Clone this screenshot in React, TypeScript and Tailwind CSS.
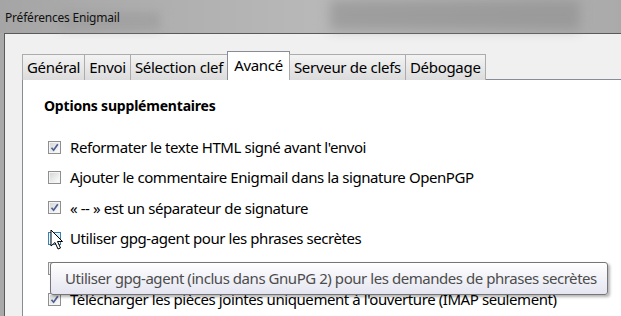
import React from 'react';

const tabs = ['Général', 'Envoi', 'Sélection clef', 'Avancé', 'Serveur de clefs', 'Débogage'];

const rows = [
  { label: "Reformater le texte HTML signé avant l'envoi", checked: true },
  { label: 'Ajouter le commentaire Enigmail dans la signature OpenPGP', checked: false },
  { label: '« -- » est un séparateur de signature', checked: true },
  { label: 'Utiliser gpg-agent pour les phrases secrètes', checked: false, hover: true },
  { label: '', checked: false },
  { label: "Télécharger les pièces jointes uniquement à l'ouverture (IMAP seulement)", checked: true },
];

function Checkbox({ checked, hover }: { checked: boolean; hover?: boolean }) {
  return (
    <div
      className={`w-[13px] h-[13px] border p-[1px] shrink-0 ${hover ? 'border-[#3c7fb1] bg-[#eaf6fd]' : 'border-[#8e8f8f] bg-[#f4f4f4]'}`}
    >
      <div
        className={`w-full h-full relative ${hover ? 'bg-gradient-to-br from-[#b9e2f9] to-[#e6f5fd]' : 'bg-gradient-to-br from-[#d8d8d8] to-[#fbfbfb]'}`}
      >
        {checked && (
          <svg viewBox="0 0 9 9" className="absolute inset-0 w-full h-full">
            <path d="M1.5 4.8 L3.6 7.2 L7.8 1.2" stroke="#4b5f92" strokeWidth="1.7" fill="none" />
          </svg>
        )}
      </div>
    </div>
  );
}

export default function App() {
  return (
    <div className="w-[621px] h-[316px] overflow-hidden relative bg-[#a7a7a7] font-['Noto_Sans',sans-serif]">
      {/* title bar */}
      <div className="h-[33px] relative bg-gradient-to-r from-[#a5a5a5] via-[#b8b8b8] to-[#aaaaaa] flex items-center pl-[5px]">
        <div className="absolute left-[330px] top-[0px] w-[250px] h-[30px] bg-[#8e8e8e] blur-[6px] opacity-60" />
        <div className="absolute left-[60px] top-[12px] w-[100px] h-[18px] bg-[#9a9a9a] blur-[5px] opacity-60" />
        <span className="relative text-[12px] text-[#111] tracking-[-0.2px] pt-[2px]">Préférences Enigmail</span>
      </div>
      {/* body */}
      <div className="flex h-[283px]">
        <div className="w-[4px] bg-[#a9a9a9]" />
        <div className="flex-1 bg-[#f0f0f0] border-l border-t border-[#5a5a5a] pl-[17px] pt-[17px]">
          <div className="flex items-end h-[29px] relative z-10">
            {tabs.map((t) =>
              t === 'Avancé' ? (
                <div
                  key={t}
                  className="h-[29px] -ml-[1px] px-[6px] bg-white border border-b-0 border-[#898c95] text-[15px] text-black flex items-center pb-[2px] tracking-[-0.3px]"
                >
                  {t}
                </div>
              ) : (
                <div
                  key={t}
                  className="h-[26px] -ml-[1px] first:ml-0 px-[4px] border border-b-0 border-[#acacac] bg-gradient-to-b from-[#f3f3f3] to-[#dcdcdc] text-[15px] text-black flex items-center tracking-[-0.3px]"
                >
                  {t}
                </div>
              )
            )}
          </div>
          <div className="h-[250px] bg-white border-l border-t border-[#898c95] -mt-[1px] pl-[21px] pt-[14px]">
            <div className="h-[22px] flex items-center text-[14px] font-bold text-black tracking-[-0.2px]">Options supplémentaires</div>
            <div className="mt-[16px] pl-[4px]">
              {rows.map((r, i) => (
                <div key={i} className="h-[30.4px] flex items-center gap-[9px]">
                  <Checkbox checked={r.checked} hover={r.hover} />
                  <span className="text-[15px] text-black tracking-[-0.42px] whitespace-nowrap">{r.label}</span>
                </div>
              ))}
            </div>
          </div>
        </div>
      </div>
      {/* mouse cursor */}
      <svg className="absolute left-[50px] top-[229px] w-[14px] h-[22px]" viewBox="0 0 14 22">
        <path d="M1 1 L1 17 L5 13.5 L8 20 L10.5 19 L7.5 12.5 L12.5 12.5 Z" fill="white" stroke="black" strokeWidth="1" />
      </svg>
      {/* tooltip */}
      <div className="absolute left-[50px] top-[262px] w-[558px] h-[33px] rounded-[3px] border border-[#767676] bg-gradient-to-b from-white to-[#e4e5f0] shadow-[2px_2px_3px_rgba(0,0,0,0.3)] flex items-center pl-[14px] text-[15px] text-[#4c4c4c] tracking-[-0.45px] whitespace-nowrap">
        Utiliser gpg-agent (inclus dans GnuPG 2) pour les demandes de phrases secrètes
      </div>
    </div>
  );
}
